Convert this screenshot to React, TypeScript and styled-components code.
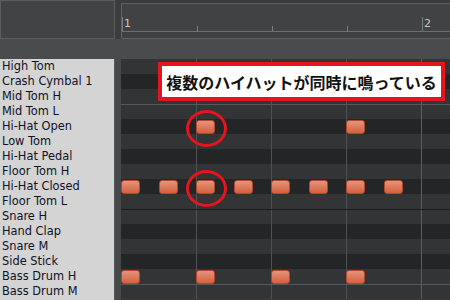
import React from "react";
import styled, { createGlobalStyle } from "styled-components";

const Global = createGlobalStyle`
  html, body { margin: 0; padding: 0; background: #3b3c3e; }
  * { box-sizing: border-box; }
`;

type Sep = "light" | "dark" | undefined;
interface RowDef { name: string; dark?: boolean; sep?: Sep; notes?: number[] }

const rows: RowDef[] = [
  { name: "High Tom" },
  { name: "Crash Cymbal 1", dark: true },
  { name: "Mid Tom H" },
  { name: "Mid Tom L", sep: "light" },
  { name: "Hi-Hat Open", dark: true, notes: [4, 12] },
  { name: "Low Tom" },
  { name: "Hi-Hat Pedal", dark: true },
  { name: "Floor Tom H" },
  { name: "Hi-Hat Closed", dark: true, notes: [0, 2, 4, 6, 8, 10, 12, 14] },
  { name: "Floor Tom L" },
  { name: "Snare H", sep: "dark" },
  { name: "Hand Clap", dark: true },
  { name: "Snare M" },
  { name: "Side Stick", dark: true },
  { name: "Bass Drum H", notes: [0, 4, 8, 12] },
  { name: "Bass Drum M", sep: "light" },
];

const Screen = styled.div`
  width: 450px;
  height: 300px;
  overflow: hidden;
  display: flex;
  flex-direction: column;
  background: #3b3c3e;
  font-family: "DejaVu Sans", sans-serif;
`;

const TopBar = styled.div`
  height: 39px;
  display: flex;
  gap: 6px;
  flex: none;
`;

const CornerBox = styled.div`
  width: 115px;
  flex: none;
  height: 39px;
  border: 1px solid #5b5c5e;
  background: #424345;
`;

const RulerBox = styled.div`
  flex: 1;
  min-width: 0;
  overflow: hidden;
  margin-top: 3px;
  display: flex;
  flex-direction: column;
  border-top: 1px solid #5d5e60;
  border-left: 1px solid #626365;
  border-bottom: 1px solid #5d5e60;
  background: #3f4042;
`;

const Ruler = styled.div`
  height: 28px;
  flex: none;
  display: flex;
  border-bottom: 1px solid #6c6e70;
  background: #404244;
`;

const BeatCell = styled.div<{ $bar?: boolean }>`
  width: 75px;
  flex: none;
  display: flex;
  align-items: flex-end;
  padding: 0 0 2px 2px;
  background: linear-gradient(#7a7c7e, #7a7c7e) left bottom / 1px ${(p) => (p.$bar ? "14px" : "5px")} no-repeat;
  color: #c4c6c8;
  font-size: 11px;
  line-height: 11px;
`;

const Strip = styled.div`
  height: 20px;
  flex: none;
  background: #4a4b4d;
`;

const Body = styled.div`
  flex: 1;
  display: flex;
  min-height: 0;
`;

const LabelPanel = styled.div`
  width: 114px;
  flex: none;
  background: #d4d4d4;
  display: flex;
  flex-direction: column;
`;

const Label = styled.div`
  height: 15px;
  flex: none;
  line-height: 15px;
  padding-left: 2px;
  font-size: 11.4px;
  color: #101028;
  white-space: nowrap;
`;

const Divider = styled.div`
  width: 7px;
  flex: none;
  background: #46484a;
  border-left: 1px solid #58595b;
`;

const GridArea = styled.div`
  flex: 1;
  min-width: 0;
  position: relative;
  display: flex;
  flex-direction: column;
`;

const vline = (x: number, c: string) => `linear-gradient(${c}, ${c}) ${x}px 0 / 1px 100% no-repeat`;

const GridRow = styled.div<{ $dark?: boolean; $sep?: Sep }>`
  height: 15px;
  flex: none;
  display: grid;
  grid-template-columns: repeat(16, 18.75px) 1fr;
  align-items: start;
  background:
    ${(p) =>
      p.$sep
        ? `linear-gradient(${p.$sep === "light" ? "#56595c" : "#1b1c1d"}, ${p.$sep === "light" ? "#56595c" : "#1b1c1d"}) 0 0 / 100% 1px no-repeat,`
        : ""}
    ${vline(75, "#4e5154")},
    ${vline(150, "#4e5154")},
    ${vline(225, "#4e5154")},
    ${vline(300, "#5b5e61")},
    ${(p) => (p.$dark ? "#242527" : "#323436")};
`;

const Note = styled.div<{ $step: number }>`
  grid-column: ${(p) => p.$step + 1};
  grid-row: 1;
  width: 19px;
  height: 14px;
  margin-top: 1px;
  border: 1px solid #b5472c;
  border-radius: 3px;
  background: linear-gradient(#e5947d, #d5603e);
`;

const Callout = styled.div`
  position: absolute;
  left: 37px;
  top: 3px;
  width: 287px;
  height: 39px;
  border: 4px solid #e6141d;
  background: #ffffff;
  display: flex;
  align-items: center;
  justify-content: center;
  font-family: "Noto Sans CJK JP", sans-serif;
  font-weight: 700;
  font-size: 16px;
  color: #111111;
  white-space: nowrap;
`;

const Ring = styled.div<{ $top: number }>`
  position: absolute;
  left: 65px;
  top: ${(p) => p.$top}px;
  width: 41px;
  height: 37px;
  border: 3px solid #e6141d;
  border-radius: 50%;
`;

export default function App() {
  return (
    <Screen>
      <Global />
      <TopBar>
        <CornerBox />
        <RulerBox>
          <Ruler>
            <BeatCell $bar>1</BeatCell>
            <BeatCell />
            <BeatCell />
            <BeatCell />
            <BeatCell $bar>2</BeatCell>
          </Ruler>
        </RulerBox>
      </TopBar>
      <Strip />
      <Body>
        <LabelPanel>
          {rows.map((r) => (
            <Label key={r.name}>{r.name}</Label>
          ))}
        </LabelPanel>
        <Divider />
        <GridArea>
          {rows.map((r) => (
            <GridRow key={r.name} $dark={r.dark} $sep={r.sep}>
              {(r.notes || []).map((s) => (
                <Note key={s} $step={s} />
              ))}
            </GridRow>
          ))}
          <Callout>複数のハイハットが同時に鳴っている</Callout>
          <Ring $top={51} />
          <Ring $top={111} />
        </GridArea>
      </Body>
    </Screen>
  );
}
